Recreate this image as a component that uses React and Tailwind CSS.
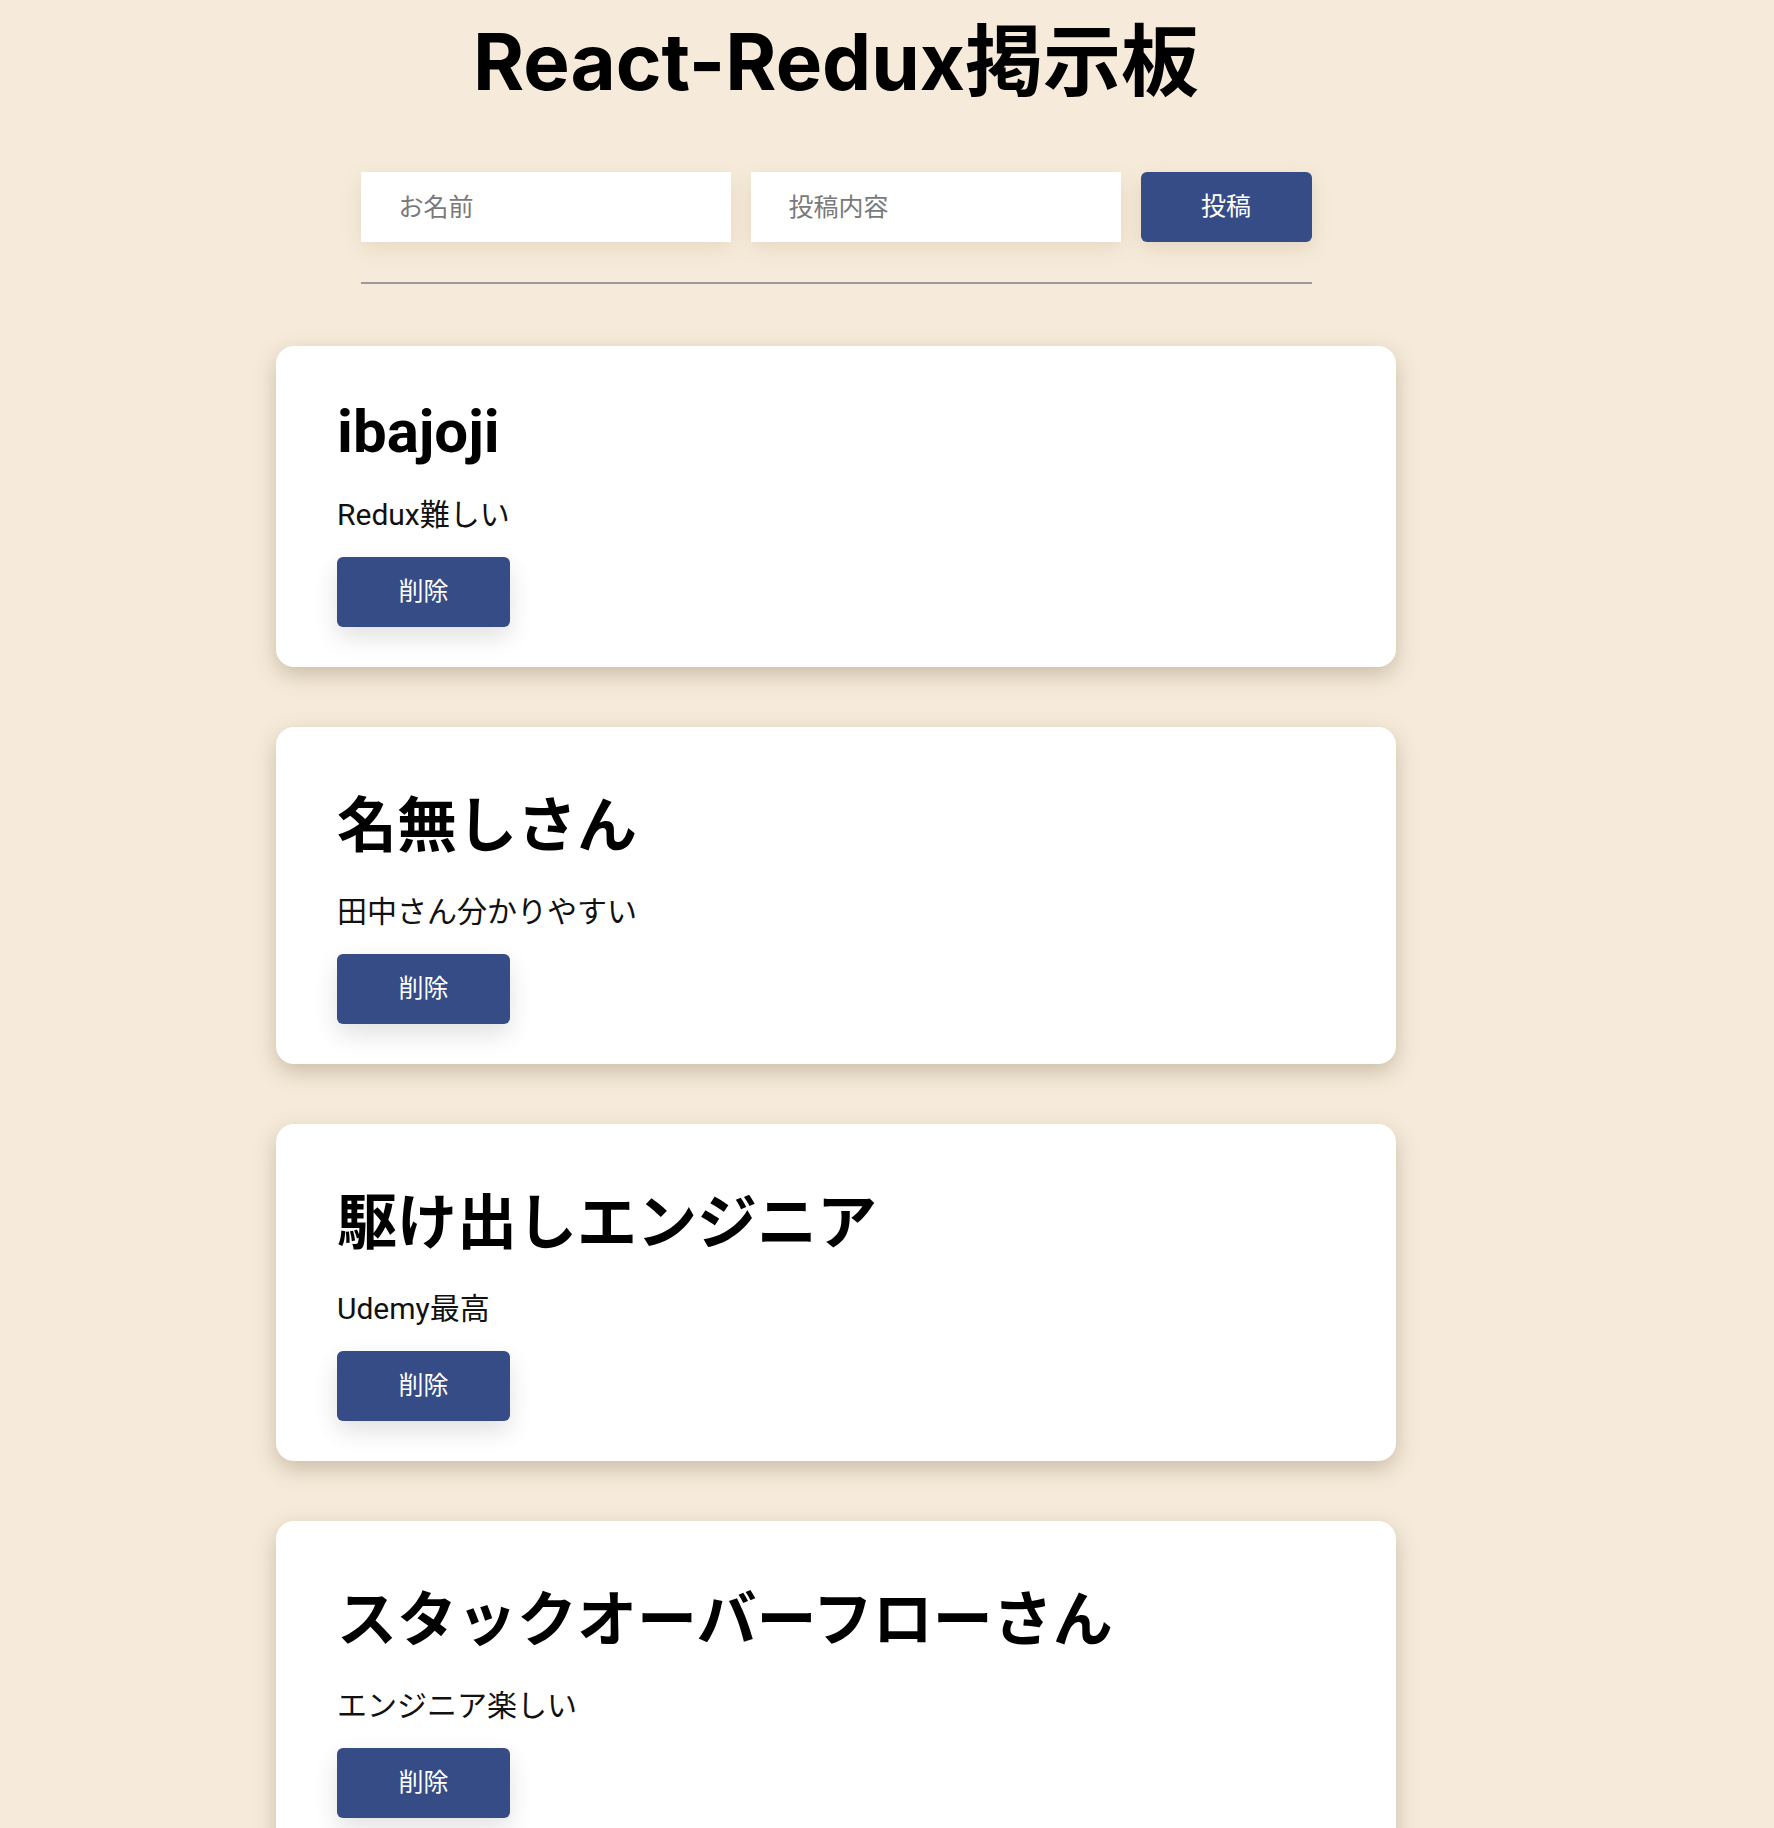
import { useState } from "react";

const initialPosts = [
  { id: 1, name: "ibajoji", content: "Redux難しい" },
  { id: 2, name: "名無しさん", content: "田中さん分かりやすい" },
  { id: 3, name: "駆け出しエンジニア", content: "Udemy最高" },
  { id: 4, name: "スタックオーバーフローさん", content: "エンジニア楽しい" },
];

export default function App() {
  const [posts, setPosts] = useState(initialPosts);
  const [name, setName] = useState("");
  const [content, setContent] = useState("");

  const handleSubmit = (e) => {
    e.preventDefault();
    if (!name && !content) return;
    setPosts([...posts, { id: Date.now(), name: name || "名無しさん", content }]);
    setName("");
    setContent("");
  };

  const handleDelete = (id) => {
    setPosts(posts.filter((post) => post.id !== id));
  };

  return (
    <div
      className="min-h-screen bg-[#f6ebda] pl-[276px] text-black"
      style={{ fontFamily: 'Roboto, "Noto Sans CJK JP", sans-serif' }}
    >
      <div className="w-[1120px] flex flex-col items-center">
        <h1
          className="text-[78px] font-bold leading-[normal]"
          style={{ fontFamily: 'Inter, "Noto Sans CJK JP", sans-serif' }}
        >
          React-Redux掲示板
        </h1>

        <form onSubmit={handleSubmit} className="mt-[60px] flex gap-[20px]">
          <input
            type="text"
            placeholder="お名前"
            value={name}
            onChange={(e) => setName(e.target.value)}
            className="w-[370px] h-[70px] bg-white px-[38px] text-[25px] placeholder:text-[#7a7a7a] outline-none shadow-[0_6px_20px_rgba(120,90,40,0.12)]"
          />
          <input
            type="text"
            placeholder="投稿内容"
            value={content}
            onChange={(e) => setContent(e.target.value)}
            className="w-[370px] h-[70px] bg-white px-[38px] text-[25px] placeholder:text-[#7a7a7a] outline-none shadow-[0_6px_20px_rgba(120,90,40,0.12)]"
          />
          <button
            type="submit"
            className="w-[171px] h-[70px] rounded-[6px] bg-[#364c87] text-white text-[25px] shadow-[0_6px_20px_rgba(120,90,40,0.15)]"
          >
            投稿
          </button>
        </form>

        <hr className="mt-[40px] w-[951px] border-0 border-t-2 border-[#9b9b9b]" />

        <div className="mt-[62px] w-full flex flex-col gap-[60px] pb-[60px]">
          {posts.map((post) => (
            <div
              key={post.id}
              className="bg-white rounded-[18px] pt-[50px] pb-[40px] px-[61px] shadow-[0_8px_22px_rgba(90,70,40,0.28)]"
            >
              <h2 className="text-[60px] font-bold leading-[normal]">{post.name}</h2>
              <p className="mt-[23px] text-[30px] leading-[normal] text-[#111]">{post.content}</p>
              <button
                onClick={() => handleDelete(post.id)}
                className="mt-[23px] w-[173px] h-[70px] rounded-[6px] bg-[#364c87] text-white text-[25px] shadow-[0_10px_24px_rgba(0,0,0,0.12)]"
              >
                削除
              </button>
            </div>
          ))}
        </div>
      </div>
    </div>
  );
}
